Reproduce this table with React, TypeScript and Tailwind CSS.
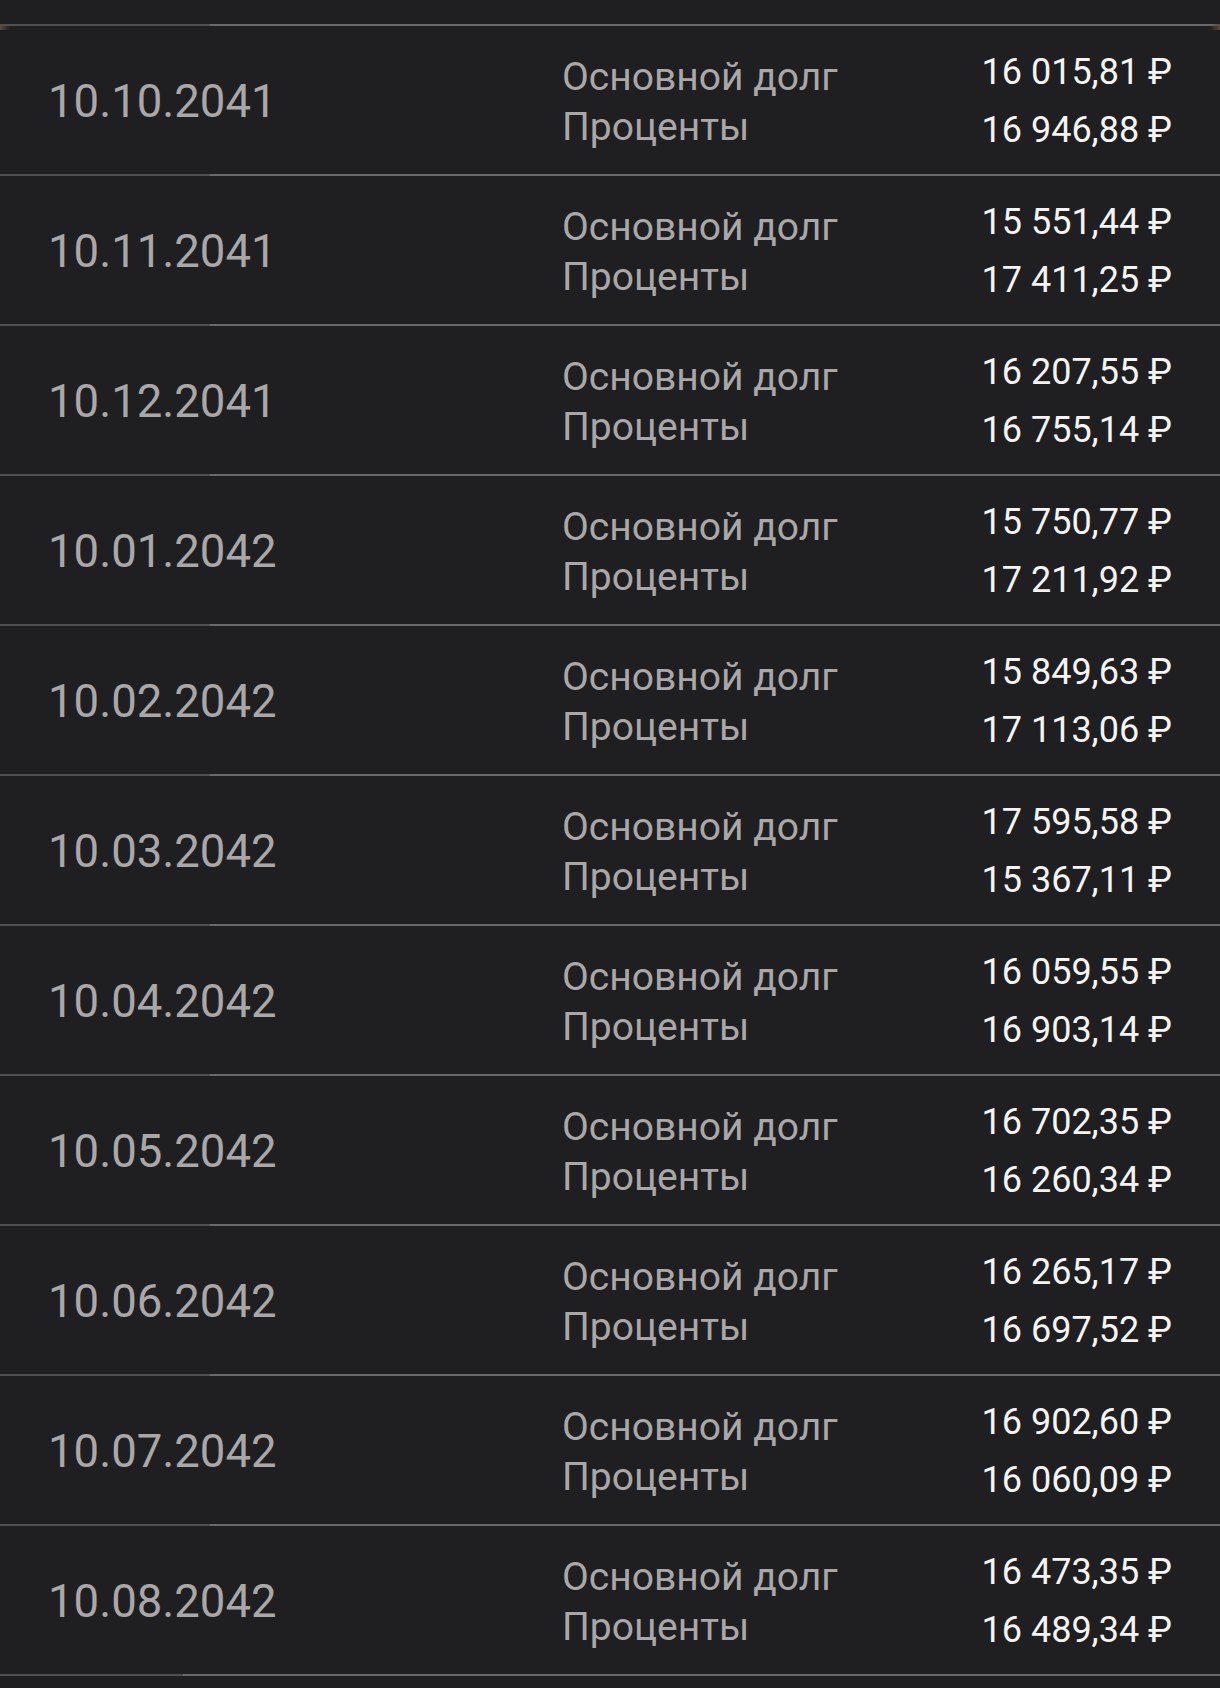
import React from 'react';

interface Payment {
  date: string;
  principal: string;
  interest: string;
}

const payments: Payment[] = [
  { date: '10.10.2041', principal: '16 015,81 ₽', interest: '16 946,88 ₽' },
  { date: '10.11.2041', principal: '15 551,44 ₽', interest: '17 411,25 ₽' },
  { date: '10.12.2041', principal: '16 207,55 ₽', interest: '16 755,14 ₽' },
  { date: '10.01.2042', principal: '15 750,77 ₽', interest: '17 211,92 ₽' },
  { date: '10.02.2042', principal: '15 849,63 ₽', interest: '17 113,06 ₽' },
  { date: '10.03.2042', principal: '17 595,58 ₽', interest: '15 367,11 ₽' },
  { date: '10.04.2042', principal: '16 059,55 ₽', interest: '16 903,14 ₽' },
  { date: '10.05.2042', principal: '16 702,35 ₽', interest: '16 260,34 ₽' },
  { date: '10.06.2042', principal: '16 265,17 ₽', interest: '16 697,52 ₽' },
  { date: '10.07.2042', principal: '16 902,60 ₽', interest: '16 060,09 ₽' },
  { date: '10.08.2042', principal: '16 473,35 ₽', interest: '16 489,34 ₽' },
];

const Divider = ({ short = false }: { short?: boolean }) => (
  <div className="flex h-[2px]">
    <div className={`${short ? 'w-[183px]' : 'w-[210px]'} bg-[#4f4f50]`} />
    <div className="flex-1 bg-[#6a6a6b]" />
  </div>
);

const PaymentRow = ({ payment }: { payment: Payment }) => (
  <div className="flex items-center h-[148px]">
    <div className="w-[562px] pl-[48px] mt-[3px] text-[45.5px] leading-none text-[#a9a7a7]">
      {payment.date}
    </div>
    <div className="flex-1 pt-[4px] text-[39px] leading-[50px] text-[#a9a7a7]">
      <div>Основной долг</div>
      <div>Проценты</div>
    </div>
    <div className="pr-[48px] pt-[1px] text-right text-[36px] leading-[58px] text-[#f4f4f4]">
      <div>{payment.principal}</div>
      <div>{payment.interest}</div>
    </div>
  </div>
);

export default function App() {
  return (
    <div
      className="relative min-h-[1688px] bg-[#1f1f21] pt-[24px]"
      style={{ fontFamily: 'Roboto, "Noto Sans", sans-serif' }}
    >
      {/* rounded corner bits peeking from the card above */}
      <div className="absolute left-0 top-[24px] h-[6px] w-[10px] bg-gradient-to-r from-[#5a4c3e] to-transparent" />
      <div className="absolute right-0 top-[24px] h-[6px] w-[10px] bg-gradient-to-l from-[#5a4c3e] to-transparent" />

      <Divider />
      {payments.map((p, i) => (
        <div key={p.date}>
          <PaymentRow payment={p} />
          <Divider short={i === payments.length - 1} />
        </div>
      ))}
    </div>
  );
}
